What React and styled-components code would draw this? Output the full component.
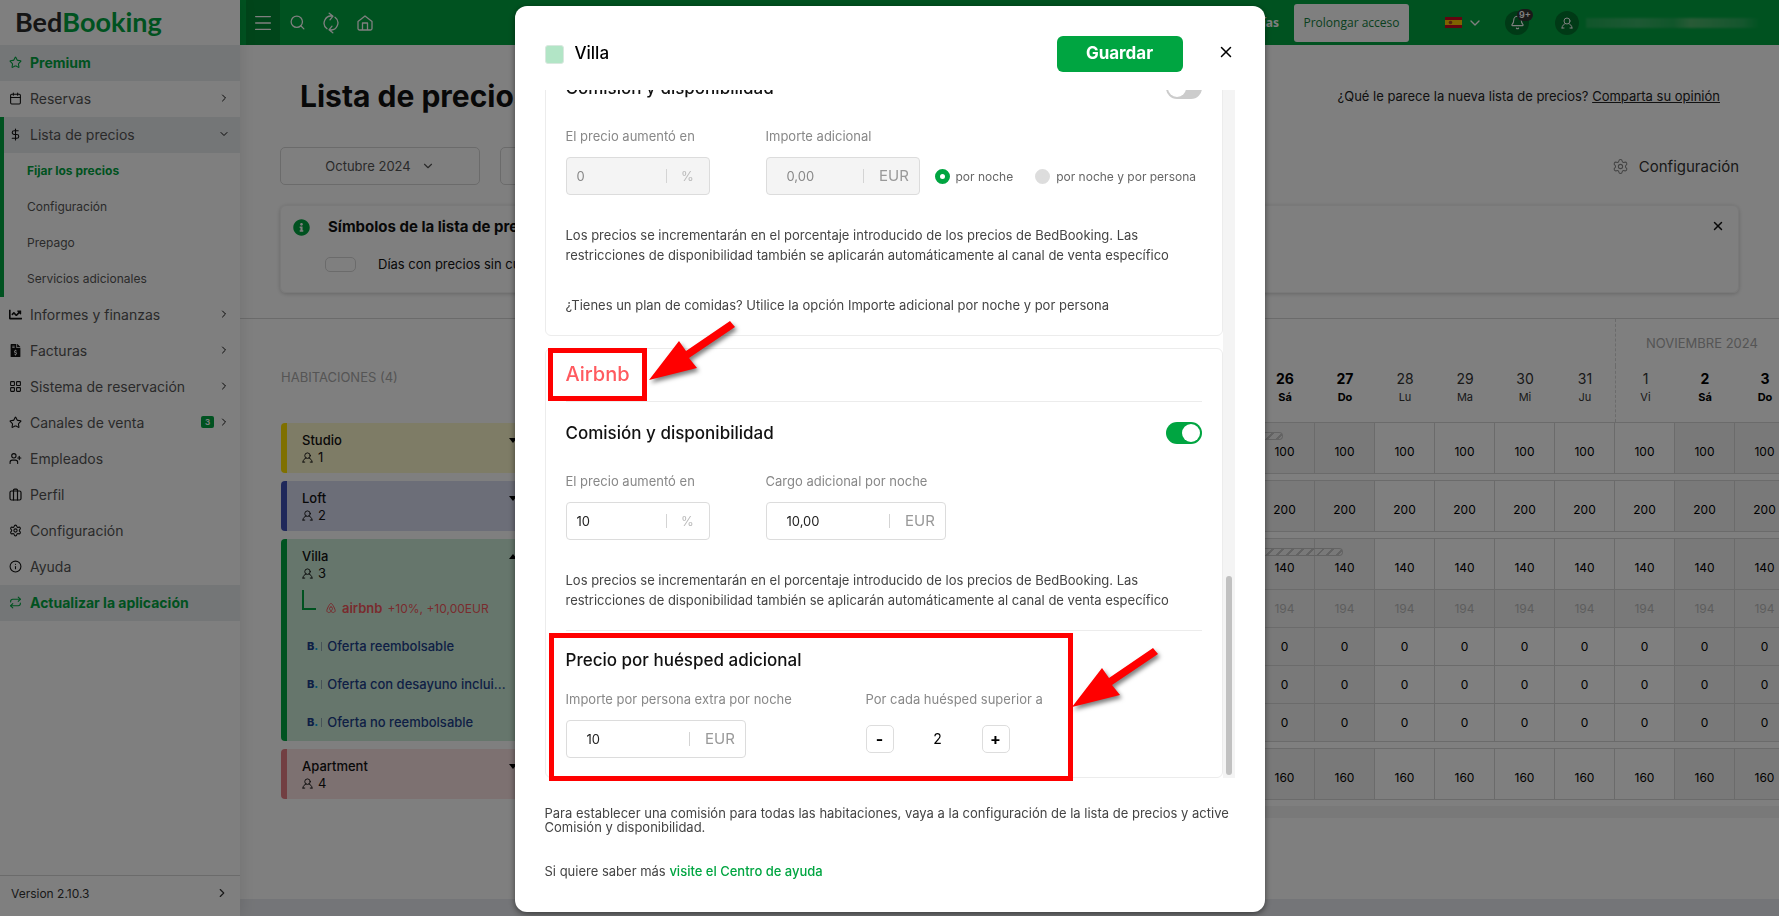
import React from "react";
import styled, { createGlobalStyle, css } from "styled-components";
import {
  Star, Calendar, DollarSign, LayoutGrid, UserPlus, Settings, Info, Repeat,
  Menu, Search, ChevronRight, ChevronDown, X, Bell,
} from "lucide-react";
import { FaChartLine, FaFileInvoiceDollar, FaInfoCircle } from "react-icons/fa";
import { TbBrandAirbnb } from "react-icons/tb";

const green = "#00a541";
const line = "#d6d6d6";

const GlobalStyle = createGlobalStyle`
  *, *::before, *::after { box-sizing: border-box; }
  body { margin: 0; background: #fff; overflow: hidden; }
  body, button, input { font-family: Inter, "Liberation Sans", sans-serif; }
  button { padding: 0; border: 0; background: none; color: inherit; cursor: pointer; }
  a { color: inherit; text-decoration: none; }
  h1, h2, h3, p, ul { margin: 0; padding: 0; }
`;

/* ---------- page shell ---------- */
const Page = styled.div`
  display: flex;
  height: 100vh;
  color: #111;
`;

const Sidebar = styled.nav`
  display: flex;
  flex-direction: column;
  width: 240px;
  flex: none;
  background: #fff;
  box-shadow: 0 0 16px rgba(0, 0, 0, 0.12);
  z-index: 1;
`;

const Logo = styled.a`
  display: flex;
  align-items: center;
  height: 45px;
  flex: none;
  padding: 0 0 2px 15px;
  font: 700 27px Lato, "Open Sans", sans-serif;
  color: #2b2b2b;
  span { color: ${green}; }
`;

const MenuList = styled.ul`
  list-style: none;
`;

const MenuLink = styled.a`
  display: flex;
  align-items: center;
  gap: 8px;
  height: 36px;
  padding: 0 10px 2px 9px;
  font-size: 14px;
  color: #555;
  > svg { flex: none; width: 13px; height: 13px; color: #111; }
  > svg:last-child { width: 12px; height: 12px; }
  ${(p) => p.$accent && css`
    background: #e9ecef;
    font-weight: 700;
    color: ${green};
    > svg { color: ${green}; }
  `}
  ${(p) => p.$open && css`
    background: #e9ecef;
  `}
`;

const MenuLabel = styled.span`
  flex: 1;
  white-space: nowrap;
`;

const MenuGroup = styled.li`
  box-shadow: inset 4px 0 0 ${green};
  ${MenuLink} { margin-left: 4px; padding-left: 5px; }
`;

const SubLink = styled.a`
  display: flex;
  align-items: center;
  height: 36px;
  padding: 0 0 2px 27px;
  font-size: 12px;
  color: ${(p) => (p.$active ? green : "#555")};
  font-weight: ${(p) => (p.$active ? 700 : 400)};
`;

const CountBadge = styled.span`
  width: 13px;
  height: 12px;
  margin-right: -4px;
  border-radius: 2px;
  background: ${green};
  color: #fff;
  font-size: 8px;
  font-weight: 700;
  line-height: 12px;
  text-align: center;
`;

const Version = styled.a`
  display: flex;
  align-items: center;
  justify-content: space-between;
  height: 41px;
  margin-top: auto;
  padding: 0 11px 6px 11px;
  border-top: 1px solid ${line};
  font-size: 12px;
  color: #333;
`;

const Main = styled.div`
  display: flex;
  flex-direction: column;
  flex: 1;
  min-width: 0;
`;

const TopBar = styled.header`
  display: flex;
  align-items: center;
  height: 45px;
  flex: none;
  padding: 0 19px 0 6px;
  background: ${green};
  color: #fff;
`;

const ToolButton = styled.button`
  display: grid;
  place-items: center;
  width: 34px;
  height: 45px;
  background: ${(p) => (p.$active ? "#008a34" : "none")};
`;

const TopRight = styled.div`
  display: flex;
  align-items: center;
  margin-left: auto;
`;

const Trial = styled.strong`
  font: 700 12px "Noto Sans", "Open Sans", sans-serif;
`;

const ExtendButton = styled.button`
  width: 115px;
  height: 38px;
  margin: 0 36px 0 15px;
  border-radius: 3px;
  background: #fff;
  color: #12803c;
  font: 500 12px "Open Sans", "Noto Sans", sans-serif;
`;

const Language = styled.button`
  display: flex;
  align-items: center;
  gap: 5px;
`;

const Round = styled.button`
  position: relative;
  display: grid;
  place-items: center;
  width: 24px;
  height: 24px;
  margin-left: 22px;
  border-radius: 50%;
  background: #00742d;
  & + & { margin-left: 26px; }
`;

const Notice = styled.span`
  position: absolute;
  top: -2px;
  left: 12px;
  width: 16px;
  height: 12px;
  border-radius: 6px;
  background: #333;
  font-size: 9px;
  font-weight: 600;
  line-height: 12px;
`;

const HiddenMail = styled.span`
  width: 174px;
  height: 10px;
  margin-left: 7px;
  background: linear-gradient(90deg, #2fae5e, #55b878 30%, #2fae5e 50%, #74bd80 60%, #3bb067 90%, ${green});
  opacity: 0.7;
  filter: blur(1px);
`;

const Content = styled.main`
  flex: 1;
  min-height: 0;
  overflow: hidden;
`;

const Bottom = styled.div`
  height: 17px;
  flex: none;
  background: #e9ebf0;
`;

const TitleRow = styled.div`
  display: flex;
  align-items: center;
  justify-content: space-between;
  height: 102px;
  padding: 0 59px 0 60px;
  h1 { font-size: 30px; font-weight: 700; }
  p { font-size: 13px; color: #222; }
  a { text-decoration: underline; }
`;

const Filters = styled.div`
  display: flex;
  align-items: center;
  gap: 20px;
  padding: 0 40px;
`;

const FilterButton = styled.button`
  display: flex;
  align-items: center;
  justify-content: center;
  gap: 10px;
  width: 200px;
  height: 38px;
  border: 1px solid ${line};
  border-radius: 5px;
  font-size: 13px;
  color: #555;
`;

const ConfigButton = styled.button`
  display: flex;
  align-items: center;
  gap: 10px;
  margin-left: auto;
  font-size: 15px;
  color: #333;
  svg { color: #888; }
`;

const Legend = styled.section`
  display: grid;
  grid-template-columns: 17px 1fr 16px;
  gap: 17px 18px;
  align-content: start;
  height: 88px;
  margin: 20px 40px 25px;
  padding: 11px 12px;
  border: 1px solid #f2f2f2;
  border-radius: 6px;
  box-shadow: 0 1px 4px rgba(0, 0, 0, 0.2);
  > svg { align-self: center; }
  h2 { font-size: 15px; font-weight: 700; line-height: 20px; }
  p {
    grid-column: 2;
    display: flex;
    align-items: center;
    gap: 22px;
    margin-left: -3px;
    font-size: 13px;
    line-height: 20px;
  }
`;

const Pill = styled.span`
  width: 31px;
  height: 15px;
  border: 1px solid ${line};
  border-radius: 5px;
`;

/* ---------- price grid ---------- */
const Prices = styled.section`
  display: flex;
  border-top: 1px solid ${line};
`;

const Rooms = styled.div`
  display: flex;
  flex-direction: column;
  gap: 8px;
  width: 295px;
  flex: none;
  padding: 0 14px 0 41px;
`;

const RoomsTitle = styled.div`
  height: 96px;
  padding: 50px 0 0;
  font-size: 13px;
  font-weight: 400;
  line-height: 16px;
  color: #aaa;
`;

const Room = styled.article`
  min-height: 50px;
  padding: 9px 0 0 15px;
  border-left: 6px solid ${(p) => p.$color};
  border-radius: 4px;
  background: ${(p) => p.$tint};
`;

const RoomName = styled.div`
  display: flex;
  align-items: center;
  justify-content: space-between;
  padding-right: 4px;
  font-size: 13px;
  font-weight: 500;
  line-height: 17px;
`;

const Caret = styled.span`
  border: 4px solid transparent;
  border-width: ${(p) => (p.$up ? "0 4px 5px" : "5px 4px 0")};
  ${(p) => (p.$up ? "border-bottom-color" : "border-top-color")}: #000;
`;

const Guests = styled.div`
  display: flex;
  align-items: center;
  gap: 5px;
  font-size: 13px;
  line-height: 17px;
`;

const Channel = styled.div`
  display: flex;
  align-items: center;
  gap: 5px;
  height: 38px;
  margin-top: 7px;
  font-size: 12px;
  color: #f2575c;
  b { font-size: 13px; font-weight: 600; }
  &::before {
    content: "";
    width: 14px;
    height: 20px;
    margin: 0 4px 16px 0;
    border: solid ${green};
    border-width: 0 0 2px 2px;
  }
`;

const Offer = styled.a`
  display: flex;
  align-items: center;
  height: 38px;
  padding-left: 5px;
  font-size: 13px;
  font-weight: 500;
  color: #1d3f8a;
  b { font-size: 11px; font-weight: 800; }
  i { color: #009fe3; font-style: normal; }
`;

const OfferBar = styled.span`
  width: 1px;
  height: 9px;
  margin: 0 5px 0 3px;
  background: #8fa6b0;
`;

const Calendars = styled.div`
  flex: 1;
  min-width: 0;
  overflow: hidden;
`;

const Table = styled.table`
  width: 1260px;
  table-layout: fixed;
  border-collapse: separate;
  border-spacing: 0;
  font-size: 12px;
`;

const MonthCell = styled.th`
  height: 47px;
  padding: 0 0 0 30px;
  border-left: ${(p) => (p.$next ? `1px dashed ${line}` : 0)};
  font-size: 13px;
  font-weight: 400;
  text-align: left;
  white-space: nowrap;
  color: #aaa;
`;

const DayCell = styled.th`
  height: 56px;
  padding: 4px 0 0;
  border-left: ${(p) => (p.$first ? `1px dashed ${line}` : 0)};
  vertical-align: top;
  font-size: 14px;
  font-weight: ${(p) => (p.$weekend ? 700 : 400)};
  line-height: 18px;
  color: ${(p) => (p.$weekend ? "#000" : "#333")};
  small { display: block; font-size: 11px; }
`;

const Gap = styled.td`
  height: 6px;
  padding: 0;
`;

const PriceCell = styled.td`
  position: relative;
  height: ${(p) => (p.$tall ? 52 : 38)}px;
  padding: ${(p) => (p.$tall ? 6 : 0)}px 0 0;
  border: solid ${line};
  border-width: ${(p) => (p.$tall ? "1px 1px 1px 0" : "0 1px 1px 0")};
  background: ${(p) => (p.$shade ? "#f3f3f3" : "#fff")};
  color: ${(p) => (p.$muted ? "#bbb" : "#000")};
  text-align: center;
`;

const Hatch = styled.i`
  position: absolute;
  top: 9px;
  left: 0;
  width: ${(p) => (p.$end ? 28 : 60)}px;
  height: 8px;
  border: solid #c6c6c6;
  border-width: ${(p) => (p.$end ? "1px 1px 1px 0" : "1px 0")};
  border-radius: ${(p) => (p.$end ? "0 4px 4px 0" : 0)};
  background: repeating-linear-gradient(135deg, transparent 0 5px, #c6c6c6 5px 7px);
`;

const Track = styled.div`
  height: 12px;
  margin-top: 6px;
  background: #f3f3f3;
`;

/* ---------- dialog ---------- */
const Overlay = styled.div`
  position: fixed;
  inset: 0;
  z-index: 2;
  display: flex;
  justify-content: center;
  padding: 6px 0 4px;
  background: rgba(0, 0, 0, 0.5);
`;

const Dialog = styled.section`
  position: relative;
  display: flex;
  flex-direction: column;
  width: 750px;
  max-width: 100%;
  padding: 30px 30px 34px;
  border-radius: 12px;
  background: #fff;
  box-shadow: 0 2px 6px rgba(0, 0, 0, 0.5);
`;

const DialogHead = styled.header`
  display: flex;
  align-items: center;
  height: 36px;
  flex: none;
  margin-bottom: 18px;
  h2 { flex: 1; padding-bottom: 2px; font-size: 17px; font-weight: 500; }
`;

const Swatch = styled.span`
  width: 19px;
  height: 19px;
  margin-right: 11px;
  border: 1px solid #d9e8df;
  border-radius: 3px;
  background: #b2e5c6;
`;

const SaveButton = styled.button`
  width: 126px;
  height: 36px;
  border-radius: 6px;
  padding-bottom: 2px;
  background: ${green};
  color: #fff;
  font-size: 17px;
  font-weight: 700;
`;

const CloseButton = styled.button`
  display: grid;
  place-items: center;
  width: 18px;
  height: 36px;
  margin: 0 0 4px 34px;
`;

const Scroller = styled.div`
  display: flex;
  flex: 1;
  min-height: 0;
`;

const Cards = styled.div`
  display: flex;
  flex-direction: column;
  justify-content: flex-end;
  gap: 12px;
  flex: 1;
  overflow: hidden;
`;

const ScrollTrack = styled.div`
  display: flex;
  align-items: flex-end;
  width: 12px;
  padding: 3px;
  background: #f4f4f4;
  &::after {
    content: "";
    flex: 1;
    height: 199px;
    border-radius: 3px;
    background: #c1c1c1;
  }
`;

const Card = styled.article`
  flex: none;
  padding: 0 20px;
  border: 1px solid #ececec;
  border-radius: 6px;
`;

const ChannelTitle = styled.h3`
  height: 53px;
  border-bottom: 1px solid #ececec;
  font-size: 20px;
  font-weight: 500;
  line-height: 51px;
  color: ${(p) => p.$color};
`;

const Block = styled.div`
  padding: 20px 0;
`;

const ExtraBlock = styled.div`
  padding: 18px 0 19px;
  border-top: 1px solid #ececec;
`;

const BlockHead = styled.div`
  display: flex;
  align-items: center;
  justify-content: space-between;
  height: 22px;
  margin-bottom: ${(p) => p.$gap}px;
  h3 { font-size: 17px; font-weight: 500; color: #111; }
`;

const Switch = styled.input`
  appearance: none;
  width: 36px;
  height: 22px;
  margin: 0;
  padding: 2px;
  border-radius: 11px;
  background: #ccc;
  &::before {
    content: "";
    display: block;
    width: 18px;
    height: 18px;
    border-radius: 50%;
    background: #fff;
  }
  &:checked { background: ${green}; }
  &:checked::before { margin-left: auto; }
`;

const Fields = styled.div`
  display: flex;
  align-items: flex-end;
`;

const Field = styled.div`
  display: flex;
  flex-direction: column;
  gap: 12px;
  width: ${(p) => p.$width}px;
  flex: none;
  font-size: 13px;
  line-height: 18px;
  color: #888;
  white-space: nowrap;
`;

const InputBox = styled.span`
  display: flex;
  align-items: center;
  width: ${(p) => p.$width}px;
  height: 38px;
  border: 1px solid #dcdcdc;
  border-radius: 4px;
  background: ${(p) => (p.$off ? "#f4f4f4" : "#fff")};
  input {
    flex: 1;
    min-width: 0;
    height: 100%;
    padding: 0 0 0 ${(p) => (p.$money ? 20 : 10)}px;
    border: 0;
    background: none;
    font-size: 13px;
    color: ${(p) => (p.$off ? "#888" : "#222")};
    outline: 0;
  }
  span {
    width: ${(p) => (p.$money ? 56 : 43)}px;
    padding-left: ${(p) => (p.$money ? 6 : 0)}px;
    border-left: 1px solid #d4d4d4;
    line-height: 14px;
    font-size: ${(p) => (p.$money ? 15 : 13)}px;
    color: ${(p) => (p.$money ? "#999" : "#bbb")};
    text-align: center;
  }
`;

const Radios = styled.div`
  display: flex;
  align-items: center;
  gap: 22px;
  height: 38px;
`;

const RadioLabel = styled.label`
  display: flex;
  align-items: center;
  gap: 6px;
  font-size: 12px;
  color: #666;
  white-space: nowrap;
  input {
    appearance: none;
    width: 15px;
    height: 15px;
    margin: 0;
    border: 5px solid #ddd;
    border-radius: 50%;
    background: #ddd;
  }
  input:checked { border-color: ${green}; background: #fff; }
`;

const Note = styled.p`
  margin-top: 30px;
  font-size: 13px;
  line-height: 20px;
  color: #444;
`;

const Stepper = styled.div`
  display: flex;
  align-items: center;
  width: 144px;
  height: 38px;
  output { flex: 1; text-align: center; font-size: 14px; color: #000; }
`;

const StepButton = styled.button`
  width: 28px;
  height: 28px;
  border: 1px solid #ddd;
  border-radius: 5px;
  font-size: 16px;
  font-weight: 700;
  color: #000;
`;

const DialogFoot = styled.footer`
  padding-top: 28px;
  font-size: 13px;
  line-height: 14px;
  color: #444;
  p + p { margin-top: 30px; }
  a { color: ${green}; font-weight: 500; }
`;

const Frame = styled.div`
  position: absolute;
  top: ${(p) => p.$top}px;
  left: ${(p) => p.$left}px;
  width: ${(p) => p.$w}px;
  height: ${(p) => p.$h}px;
  border: 5px solid #f00;
  pointer-events: none;
`;

const ArrowSvg = styled.svg`
  position: absolute;
  top: ${(p) => p.$top}px;
  left: ${(p) => p.$left}px;
  filter: drop-shadow(2px 3px 2px rgba(0, 0, 0, 0.5));
  pointer-events: none;
`;

const Arrow = ({ top, left }) => (
  <ArrowSvg $top={top} $left={left} width="90" height="62" viewBox="0 0 90 62">
    <path fill="#f00" d="M0 60 30 21 37 31 81 1 86 7 40 38 48 48Z" />
  </ArrowSvg>
);

/* ---------- small drawings ---------- */
const stroke = { fill: "none", stroke: "currentColor", strokeLinecap: "round", strokeLinejoin: "round" };

const SyncIcon = () => (
  <svg width="16" height="22" viewBox="0 0 16 22" {...stroke} strokeWidth="1.3">
    <path d="M4 16.7A7 7 0 0 1 9.5 4.2M6.2 1.2l3.8 3L7 7.8M12 5.3A7 7 0 0 1 6.5 17.8M9.8 20.8l-3.8-3L9 14.2" />
  </svg>
);
const HomeIcon = () => (
  <svg width="16" height="16" viewBox="0 0 16 16" {...stroke} strokeWidth="1.3">
    <path d="M1 6.5 8 1l7 5.5V13.5a1.5 1.5 0 0 1-1.5 1.5h-11A1.5 1.5 0 0 1 1 13.5ZM5.500 15V8h5V15" />
  </svg>
);
const PersonIcon = ({ size = 11 }) => (
  <svg width={size} height={size} viewBox="0 0 12 12" {...stroke} strokeWidth="1">
    <circle cx="6" cy="4" r="3" />
    <path d="M1 11c0-2.5 1.800-3.800 3.500-4.400M11 11c0-2.500-1.800-3.800-3.500-4.400M1 11h2M9 11h2" />
  </svg>
);
const CaseIcon = () => (
  <svg width="13" height="13" viewBox="0 0 13 13" {...stroke} strokeWidth="1.2">
    <rect x="1" y="3" width="11" height="9" rx="1.5" />
    <path d="M4.500 12V2.200a1 1 0 0 1 1-1h2a1 1 0 0 1 1 1V12" />
  </svg>
);
const Flag = () => (
  <svg width="17" height="11" viewBox="0 0 17 11">
    <path fill="#c60b1e" d="M0 0h17v11H0z" />
    <path fill="#ffc400" d="M0 3h17v5H0z" />
    <circle cx="5.500" cy="5.500" r="1.8" fill="#ad4a1d" />
  </svg>
);

/* ---------- data ---------- */
const firstOpen = 12;
const days = [
  ...Array.from({ length: 18 }, (_, i) => i + 14), 1, 2, 3,
].map((n, i) => ({
  n,
  name: ["Lu", "Ma", "Mi", "Ju", "Vi", "Sá", "Do"][i % 7],
  weekend: i % 7 > 4,
  first: n === 1,
  closed: i < firstOpen,
}));

const menuBefore = [
  { label: "Premium", icon: Star, accent: true },
  { label: "Reservas", icon: Calendar, more: true },
];
const menuAfter = [
  { label: "Informes y finanzas", icon: FaChartLine, more: true },
  { label: "Facturas", icon: FaFileInvoiceDollar, more: true },
  { label: "Sistema de reservación", icon: LayoutGrid, more: true },
  { label: "Canales de venta", icon: Star, more: true, count: 3 },
  { label: "Empleados", icon: UserPlus },
  { label: "Perfil", icon: CaseIcon },
  { label: "Configuración", icon: Settings },
  { label: "Ayuda", icon: Info },
  { label: "Actualizar la aplicación", icon: Repeat, accent: true },
];

const MenuItem = ({ label, icon: Icon, accent, more, count }) => (
  <li>
    <MenuLink href="#" $accent={accent}>
      <Icon />
      <MenuLabel>{label}</MenuLabel>
      {count && <CountBadge>{count}</CountBadge>}
      {more && <ChevronRight />}
    </MenuLink>
  </li>
);

const RoomHead = ({ name, guests, up }) => (
  <>
    <RoomName>{name}<Caret $up={up} /></RoomName>
    <Guests><PersonIcon />{guests}</Guests>
  </>
);

const PriceRow = ({ value, tall, muted, hatch }) => (
  <tr>
    {days.map((d, i) => (
      <PriceCell key={i} $tall={tall} $muted={muted} $shade={muted || d.weekend}>
        {hatch !== undefined && i <= hatch && <Hatch $end={i === hatch} />}
        {!d.closed && value}
      </PriceCell>
    ))}
  </tr>
);
const GapRow = () => <tr><Gap colSpan={21} /></tr>;

const AmountField = ({ id, label, value, unit, width, box, off }) => (
  <Field $width={width}>
    <label htmlFor={id}>{label}</label>
    <InputBox $width={box} $money={unit === "EUR"} $off={off}>
      <input id={id} defaultValue={value} disabled={off} />
      <span>{unit}</span>
    </InputBox>
  </Field>
);

const percentNote =
  "Los precios se incrementarán en el porcentaje introducido de los precios de BedBooking. Las restricciones de disponibilidad también se aplicarán automáticamente al canal de venta específico";

const PriceDialog = () => (
  <Dialog role="dialog" aria-label="Villa">
    <DialogHead>
      <Swatch />
      <h2>Villa</h2>
      <SaveButton>Guardar</SaveButton>
      <CloseButton aria-label="Cerrar"><X size={18} /></CloseButton>
    </DialogHead>
    <Scroller>
      <Cards>
        <Card>
          <Block>
            <BlockHead $gap={28}>
              <h3 id="com1">Comisión y disponibilidad</h3>
              <Switch type="checkbox" aria-labelledby="com1" />
            </BlockHead>
            <Fields>
              <AmountField id="pct1" label="El precio aumentó en" value="0" unit="%" width={200} box={144} off />
              <AmountField id="add1" label="Importe adicional" value="0,00" unit="EUR" width={169} box={154} off />
              <Radios>
                <RadioLabel><input type="radio" name="mode" defaultChecked />por noche</RadioLabel>
                <RadioLabel><input type="radio" name="mode" />por noche y por persona</RadioLabel>
              </Radios>
            </Fields>
            <Note>{percentNote}</Note>
            <Note>¿Tienes un plan de comidas? Utilice la opción Importe adicional por noche y por persona</Note>
          </Block>
        </Card>
        <Card>
          <ChannelTitle $color="#ff5a5f">Airbnb</ChannelTitle>
          <Block>
            <BlockHead $gap={28}>
              <h3 id="com2">Comisión y disponibilidad</h3>
              <Switch type="checkbox" aria-labelledby="com2" defaultChecked />
            </BlockHead>
            <Fields>
              <AmountField id="pct2" label="El precio aumentó en" value="10" unit="%" width={200} box={144} />
              <AmountField id="add2" label="Cargo adicional por noche" value="10,00" unit="EUR" width={200} box={180} />
            </Fields>
            <Note>{percentNote}</Note>
          </Block>
          <ExtraBlock>
            <BlockHead $gap={19}>
              <h3>Precio por huésped adicional</h3>
            </BlockHead>
            <Fields>
              <AmountField id="extra" label="Importe por persona extra por noche" value="10" unit="EUR" width={300} box={180} />
              <Field $width={200}>
                <label htmlFor="guests">Por cada huésped superior a</label>
                <Stepper>
                  <StepButton aria-label="Menos">-</StepButton>
                  <output id="guests">2</output>
                  <StepButton aria-label="Más">+</StepButton>
                </Stepper>
              </Field>
            </Fields>
          </ExtraBlock>
        </Card>
      </Cards>
      <ScrollTrack />
    </Scroller>
    <DialogFoot>
      <p>Para establecer una comisión para todas las habitaciones, vaya a la configuración de la lista de precios y active Comisión y disponibilidad.</p>
      <p>Si quiere saber más <a href="#">visite el Centro de ayuda</a></p>
    </DialogFoot>
    <Frame $top={342} $left={33} $w={99} $h={53} />
    <Arrow top={314} left={134} />
    <Frame $top={627} $left={34} $w={524} $h={148} />
    <Arrow top={641} left={557} />
  </Dialog>
);

export default function App() {
  return (
    <>
      <GlobalStyle />
      <Page>
        <Sidebar>
          <Logo href="#">Bed<span>Booking</span></Logo>
          <MenuList>
            {menuBefore.map((m) => <MenuItem key={m.label} {...m} />)}
            <MenuGroup>
              <MenuLink href="#" $open>
                <DollarSign /><MenuLabel>Lista de precios</MenuLabel><ChevronDown />
              </MenuLink>
              <SubLink href="#" $active>Fijar los precios</SubLink>
              <SubLink href="#">Configuración</SubLink>
              <SubLink href="#">Prepago</SubLink>
              <SubLink href="#">Servicios adicionales</SubLink>
            </MenuGroup>
            {menuAfter.map((m) => <MenuItem key={m.label} {...m} />)}
          </MenuList>
          <Version href="#">Version 2.10.3<ChevronRight size={14} /></Version>
        </Sidebar>
        <Main>
          <TopBar>
            <ToolButton $active aria-label="Menú"><Menu size={22} strokeWidth={1.5} /></ToolButton>
            <ToolButton aria-label="Buscar"><Search size={17} strokeWidth={1.8} /></ToolButton>
            <ToolButton aria-label="Sincronizar"><SyncIcon /></ToolButton>
            <ToolButton aria-label="Inicio"><HomeIcon /></ToolButton>
            <TopRight>
              <Trial>14 días</Trial>
              <ExtendButton>Prolongar acceso</ExtendButton>
              <Language aria-label="Español"><Flag /><ChevronDown size={16} /></Language>
              <Round aria-label="Avisos"><Bell size={15} strokeWidth={1.8} /><Notice>9+</Notice></Round>
              <Round aria-label="Cuenta"><PersonIcon size={12} /></Round>
              <HiddenMail />
            </TopRight>
          </TopBar>
          <Content>
            <TitleRow>
              <h1>Lista de precios</h1>
              <p>¿Qué le parece la nueva lista de precios? <a href="#">Comparta su opinión</a></p>
            </TitleRow>
            <Filters>
              <FilterButton>Octubre 2024<ChevronDown size={14} /></FilterButton>
              <FilterButton aria-label="Habitaciones" />
              <ConfigButton><Settings size={17} strokeWidth={1.5} />Configuración</ConfigButton>
            </Filters>
            <Legend>
              <FaInfoCircle size={17} color={green} />
              <h2>Símbolos de la lista de precios</h2>
              <button aria-label="Cerrar"><X size={14} strokeWidth={2.5} /></button>
              <p><Pill />Días con precios sin cumplimentar</p>
            </Legend>
            <Prices>
              <Rooms>
                <RoomsTitle>HABITACIONES (4)</RoomsTitle>
                <Room $color="#ffe000" $tint="#fdf8cc"><RoomHead name="Studio" guests={1} /></Room>
                <Room $color="#3f51b5" $tint="#d9dcf0"><RoomHead name="Loft" guests={2} /></Room>
                <Room $color={green} $tint="#ccedd9">
                  <RoomHead name="Villa" guests={3} up />
                  <Channel><TbBrandAirbnb size={12} /><b>airbnb</b>+10%, +10,00EUR</Channel>
                  {["Oferta reembolsable", "Oferta con desayuno inclui...", "Oferta no reembolsable"].map((o) => (
                    <Offer href="#" key={o}><b>B<i>.</i></b><OfferBar />{o}</Offer>
                  ))}
                </Room>
                <Room $color="#e57f84" $tint="#fae2e3"><RoomHead name="Apartment" guests={4} /></Room>
              </Rooms>
              <Calendars>
                <Table>
                  <thead>
                    <tr>
                      <MonthCell colSpan={18} />
                      <MonthCell colSpan={3} $next>NOVIEMBRE 2024</MonthCell>
                    </tr>
                    <tr>
                      {days.map((d, i) => (
                        <DayCell key={i} $weekend={d.weekend} $first={d.first}>
                          {!d.closed && <>{d.n}<small>{d.name}</small></>}
                        </DayCell>
                      ))}
                    </tr>
                  </thead>
                  <tbody>
                    <PriceRow value={100} tall hatch={12} />
                    <GapRow />
                    <PriceRow value={200} tall />
                    <GapRow />
                    <PriceRow value={140} tall hatch={13} />
                    <PriceRow value={194} muted />
                    <PriceRow value={0} />
                    <PriceRow value={0} />
                    <PriceRow value={0} />
                    <GapRow />
                    <PriceRow value={160} tall />
                  </tbody>
                </Table>
                <Track />
              </Calendars>
            </Prices>
          </Content>
          <Bottom />
        </Main>
      </Page>
      <Overlay><PriceDialog /></Overlay>
    </>
  );
}
